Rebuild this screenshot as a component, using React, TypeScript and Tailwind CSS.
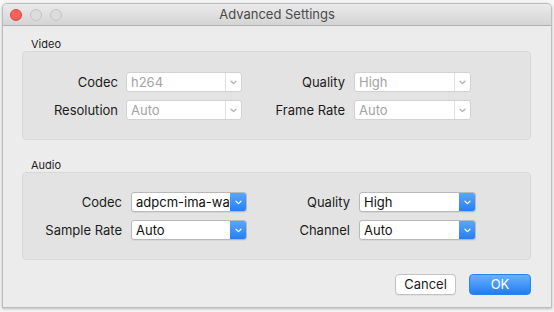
import React from "react";

const font = { fontFamily: '"Inter", "Liberation Sans", Arial, sans-serif' };

function Chevron({ color }: { color: string }) {
  return (
    <svg width="7" height="5" viewBox="0 0 7 5">
      <path d="M1 1.2 L3.5 3.6 L6 1.2" fill="none" stroke={color} strokeWidth="1.2" strokeLinecap="round" strokeLinejoin="round" />
    </svg>
  );
}

function Select({ value, disabled, width }: { value: string; disabled?: boolean; width: string }) {
  if (disabled) {
    return (
      <div className={`${width} h-[20px] flex bg-white border border-[#d2d2d2] rounded-[3px] overflow-hidden`}>
        <div className="flex-1 pl-[4px] flex items-center text-[13px] text-[#a3a3a3] leading-none overflow-hidden whitespace-nowrap">{value}</div>
        <div className="w-[16px] border-l border-[#e0e0e0] flex items-center justify-center">
          <Chevron color="#b0b0b0" />
        </div>
      </div>
    );
  }
  return (
    <div className={`${width} h-[20px] flex bg-white border border-[#b9b9b9] rounded-[3px] overflow-hidden shadow-[0_1px_0_rgba(0,0,0,0.05)]`}>
      <div className="flex-1 pl-[4px] flex items-center text-[13px] text-[#111] leading-none overflow-hidden whitespace-nowrap">{value}</div>
      <div className="w-[17px] -my-[1px] -mr-[1px] rounded-r-[3px] bg-gradient-to-b from-[#5ba8fb] to-[#1f7ef5] flex items-center justify-center">
        <Chevron color="#ffffff" />
      </div>
    </div>
  );
}

function Label({ text, width }: { text: string; width: string }) {
  return <div className={`${width} text-right text-[13px] text-[#1c1c1c] leading-none`}>{text}</div>;
}

export default function App() {
  return (
    <div className="w-[554px] h-[312px] bg-[#f6f6f6] pt-[3px] pl-[2px] pr-[2px] pb-[4px]" style={font}>
      <div className="w-[550px] h-[305px] flex flex-col bg-[#ececec] border border-[#bdbdbd] rounded-t-[5px] shadow-[0_1px_3px_rgba(0,0,0,0.25)] overflow-hidden">
        {/* Title bar */}
        <div className="h-[22px] shrink-0 relative flex items-center bg-gradient-to-b from-[#ebebeb] to-[#d4d4d4] border-b border-[#b1b1b1]">
          <div className="flex items-center gap-[8px] pl-[7px]">
            <div className="w-[12px] h-[12px] rounded-full bg-[#fc605c] border border-[#e0443e]" />
            <div className="w-[12px] h-[12px] rounded-full bg-[#dcdcdc] border border-[#c4c4c4]" />
            <div className="w-[12px] h-[12px] rounded-full bg-[#dcdcdc] border border-[#c4c4c4]" />
          </div>
          <div className="absolute inset-0 flex items-center justify-center text-[13px] text-[#4a4a4a]">Advanced Settings</div>
        </div>

        {/* Body */}
        <div className="flex-1 flex flex-col pt-[11px] pl-[19px] pr-[20px]">
          <div className="h-[14px] pl-[9px] text-[11px] leading-[14px] text-[#1c1c1c]">Video</div>
          <div className="h-[89px] bg-[#e3e3e3] border border-[#d8d8d8] rounded-[4px] pt-[20px] flex flex-col gap-[8px]">
            <div className="flex items-center">
              <Label text="Codec" width="w-[95px]" />
              <div className="ml-[8px]"><Select value="h264" disabled width="w-[116px]" /></div>
              <Label text="Quality" width="w-[103px]" />
              <div className="ml-[9px]"><Select value="High" disabled width="w-[117px]" /></div>
            </div>
            <div className="flex items-center">
              <Label text="Resolution" width="w-[95px]" />
              <div className="ml-[8px]"><Select value="Auto" disabled width="w-[116px]" /></div>
              <Label text="Frame Rate" width="w-[103px]" />
              <div className="ml-[9px]"><Select value="Auto" disabled width="w-[117px]" /></div>
            </div>
          </div>

          <div className="h-[14px] mt-[18px] pl-[9px] text-[11px] leading-[14px] text-[#1c1c1c]">Audio</div>
          <div className="h-[88px] bg-[#e3e3e3] border border-[#d8d8d8] rounded-[4px] pt-[19px] flex flex-col gap-[8px]">
            <div className="flex items-center">
              <Label text="Codec" width="w-[99px]" />
              <div className="ml-[9px]"><Select value="adpcm-ima-wav" width="w-[116px]" /></div>
              <Label text="Quality" width="w-[103px]" />
              <div className="ml-[9px]"><Select value="High" width="w-[117px]" /></div>
            </div>
            <div className="flex items-center">
              <Label text="Sample Rate" width="w-[99px]" />
              <div className="ml-[9px]"><Select value="Auto" width="w-[116px]" /></div>
              <Label text="Channel" width="w-[103px]" />
              <div className="ml-[9px]"><Select value="Auto" width="w-[117px]" /></div>
            </div>
          </div>

          <div className="mt-[14px] flex justify-end gap-[13px] pr-[0px]">
            <div className="w-[61px] h-[21px] bg-white border border-[#c2c2c2] rounded-[4px] flex items-center justify-center text-[13px] text-[#1c1c1c] shadow-[0_1px_0_rgba(0,0,0,0.05)]">Cancel</div>
            <div className="w-[62px] h-[21px] bg-gradient-to-b from-[#68b0fb] to-[#1b7df4] border border-[#2a84f0] rounded-[4px] flex items-center justify-center text-[13px] text-white">OK</div>
          </div>
        </div>
      </div>
    </div>
  );
}
